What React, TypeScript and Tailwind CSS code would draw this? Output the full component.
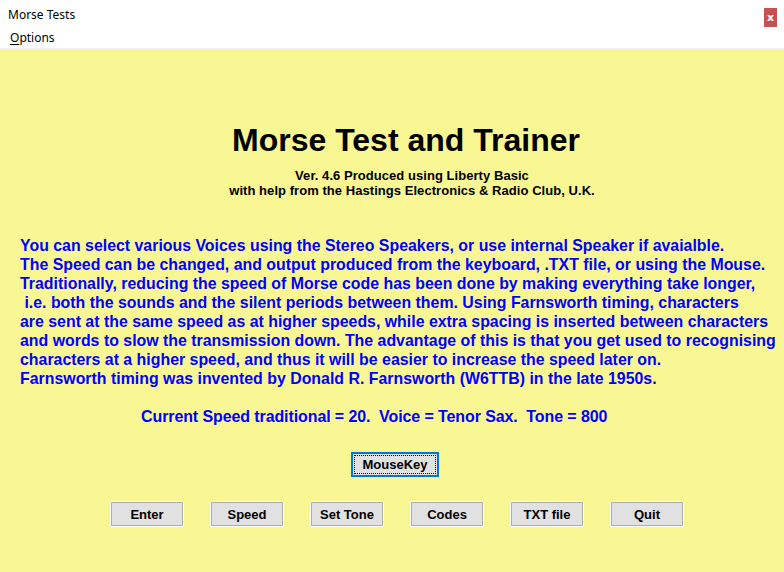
import React from 'react';

const infoLines = [
  'You can select various Voices using the Stereo Speakers, or use internal Speaker if avaialble.',
  'The Speed can be changed, and output produced from the keyboard, .TXT file, or using the Mouse.',
  'Traditionally, reducing the speed of Morse code has been done by making everything take longer,',
  ' i.e. both the sounds and the silent periods between them. Using Farnsworth timing, characters',
  'are sent at the same speed as at higher speeds, while extra spacing is inserted between characters',
  'and words to slow the transmission down. The advantage of this is that you get used to recognising',
  'characters at a higher speed, and thus it will be easier to increase the speed later on.',
  'Farnsworth timing was invented by Donald R. Farnsworth (W6TTB) in the late 1950s.',
];

const buttons = ['Enter', 'Speed', 'Set Tone', 'Codes', 'TXT file', 'Quit'];

const arial = "font-['Liberation_Sans',Arial,sans-serif]";

export default function App() {
  return (
    <div className="w-[784px] h-[572px] flex flex-col bg-white overflow-hidden">
      {/* title bar */}
      <div className="h-[30px] flex items-start justify-between bg-white">
        <span className="pl-2 pt-[7px] text-[12px] leading-[16px] text-black font-['Noto_Sans',sans-serif]">Morse Tests</span>
        <div className="mt-2 mr-[7px] w-[13px] h-[19px] bg-[#c75050] flex items-center justify-center text-white text-[11px] font-bold leading-none font-['DejaVu_Sans',sans-serif]">
          x
        </div>
      </div>

      {/* menu bar */}
      <div className="h-[18px] flex items-start bg-white">
        <span className="pl-[10px] text-[12px] leading-[16px] text-black font-['Noto_Sans',sans-serif]">
          <span className="underline underline-offset-2">O</span>ptions
        </span>
      </div>
      <div className="h-[2px] bg-[#f0f0f0]" />

      {/* main client area */}
      <div className={`flex-1 bg-[#f9f794] flex flex-col ${arial}`}>
        <h1 className="mt-[74px] pl-[232px] text-[32px] leading-[32px] font-bold text-black">
          Morse Test and Trainer
        </h1>

        <div className="mt-3 ml-[212px] w-[400px] text-center text-[13px] leading-[15px] font-bold text-black tracking-[0.05px]">
          <p>Ver. 4.6 Produced using Liberty Basic</p>
          <p>with help from the Hastings Electronics &amp; Radio Club, U.K.</p>
        </div>

        <div className="mt-[38px] pl-5 text-[15.9px] leading-[19px] font-bold text-[#0000ff]">
          {infoLines.map((line, i) => (
            <p key={i} className="whitespace-pre">{line}</p>
          ))}
        </div>

        <p className="mt-[19px] pl-[141px] whitespace-pre text-[16px] leading-[19px] font-bold text-[#0000ff] tracking-[-0.1px]">
          {'Current Speed traditional = 20.  Voice = Tenor Sax.  Tone = 800'}
        </p>

        <div className="mt-[26px] pl-[351px]">
          <button className="relative w-[88px] h-[25px] bg-[#e1e1e1] border-2 border-[#0078d7] text-[13px] font-bold text-black leading-none">
            <span className="absolute inset-[1px] border border-dotted border-black" />
            MouseKey
          </button>
        </div>

        <div className="mt-[25px] pl-[111px] flex gap-[28px]">
          {buttons.map((b) => (
            <button
              key={b}
              className="w-[72px] h-[24px] bg-[#e1e1e1] border border-[#adadad] shadow-[0_0_0_1px_#ffffff] text-[13px] font-bold text-black leading-none"
            >
              {b}
            </button>
          ))}
        </div>
      </div>
    </div>
  );
}
